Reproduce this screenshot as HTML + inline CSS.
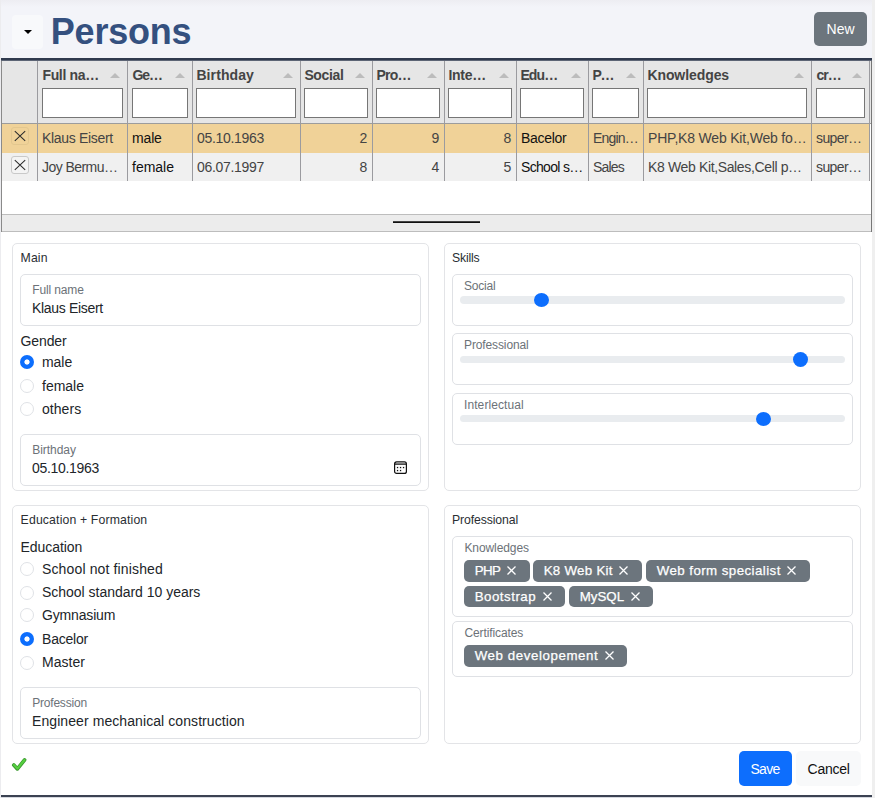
<!DOCTYPE html>
<html lang="en">
<head>
<meta charset="utf-8">
<title>Persons</title>
<style>
*{box-sizing:border-box;margin:0;padding:0}
html,body{width:875px;height:798px;overflow:hidden;background:#fff}
body{font-family:"Liberation Sans",sans-serif;font-size:14px;color:#212529;position:relative}
.abs{position:absolute}
#top{left:0;top:0;width:875px;height:58px;background:linear-gradient(#ededf2 0,#f3f4f9 7px,#f3f4f9 100%)}
#edgeL{left:0;top:0;width:1px;height:798px;background:#ececef}
#edgeR{left:872px;top:0;width:3px;height:798px;background:#efefef}
#botline{left:1px;top:795px;width:871px;height:3px;background:#3b4252;border-bottom:1px solid #d5d8df}
#dd{left:12px;top:15px;width:31px;height:34px;background:#f8f9fb;border-radius:4px}
#dd i{position:absolute;left:12px;top:15px;width:0;height:0;border-left:4px solid transparent;border-right:4px solid transparent;border-top:4px solid #000}
h1{position:absolute;left:50.8px;top:12.4px;font-size:36px;line-height:40px;font-weight:bold;color:#34507f;letter-spacing:-.22px}
.btn{position:absolute;border-radius:5px;text-align:center;font-size:14px}
#new{left:814px;top:12px;width:53px;height:34px;line-height:34px;background:#6c757d;color:#fff}
#save{left:739px;top:751px;width:53px;height:35px;line-height:35px;background:#0d6efd;color:#fff}
#cancel{left:796px;top:751px;width:65px;height:35px;line-height:35px;background:#f8f9fa;color:#111}

/* grid */
#grid{left:1px;top:58px;width:871px;height:174px;border-left:1px solid #8a8a8a;border-right:1px solid #777;background:#fff}
#gtop{left:1px;top:58px;width:871px;height:3px;background:#303a4e;border-bottom:1px solid #5d6575}
#ghead{left:2px;top:60px;width:869px;height:64px;background:#e6e6e6;border-bottom:1px solid #9c9c9c}
.row{left:2px;width:867px;height:29px}
#r1{top:124px;height:29px;background:#f0d298}
#r2{top:153px;height:28px;background:#f0f0f0}
#gfoot{left:2px;top:214px;width:869px;height:18px;background:#ececec;border-top:1px solid #bdbdbd;border-bottom:1px solid #bdbdbd}
#gfoot i{position:absolute;left:391px;top:6px;width:87px;height:2px;background:#111;border-top:1px solid #444}
.sep{top:61px;width:1px;height:120px;background:#9b9b9f}
.hl{top:66px;font-size:14px;line-height:18px;font-weight:bold;color:#444;white-space:nowrap}
.ar{top:73px;width:0;height:0;border-left:5px solid transparent;border-right:5px solid transparent;border-bottom:5px solid #bcbcbc}
.fi{top:88px;height:30px;background:#fff;border:1px solid #767676}
.c{font-size:14px;line-height:18px;white-space:nowrap;color:#444}
.c.d{color:#111}
.c.r{text-align:right}
.xb{left:10.5px;width:18px;height:18px;border:1px solid #c9c9c9;border-radius:3px;background:#f4f4f4}
.xb svg{position:absolute;left:2px;top:2px}
#xb1{top:127px;border-color:#e3c78f;background:transparent}
#xb2{top:156px}

/* cards */
.card{border:1px solid #e3e4e7;border-radius:5px;background:#fff}
.lg{font-size:12.3px;line-height:16px;color:#2a2e33;white-space:nowrap}
.box{border:1px solid #dfe1e5;border-radius:5px;background:#fff}
.fl{font-size:12px;line-height:14px;color:#6c7278;white-space:nowrap}
.fv{font-size:14px;line-height:18px;color:#212529;white-space:nowrap}
.bt{white-space:nowrap;color:#111}
.bt.w{color:#fff}
.lb{font-size:14px;line-height:18px;color:#212529;white-space:nowrap}
.rd{left:20px;width:14px;height:14px;border-radius:50%;border:1px solid #dfe2e6;background:#fff}
.rd.on{border:0;background:radial-gradient(circle at 50% 50%,#fff 0,#fff 2.2px,#0d6efd 3px)}
.trk{height:7px;border-radius:4px;background:#e9ecef}
.th{width:15px;height:15px;border-radius:50%;background:#0d6efd}
.tag{border-radius:5px;background:#6c757d;color:#fff;font-size:13.3px;padding-left:10.7px;white-space:nowrap;-webkit-text-stroke:.25px #fff}
.tag svg{display:inline-block;vertical-align:0.4px;margin-left:6.4px}
</style>
</head>
<body>
<div class="abs" id="top"></div>
<div class="abs" id="dd"><i></i></div>
<h1>Persons</h1>
<div class="btn" id="new"></div>

<div class="abs" id="grid"></div>
<div class="abs" id="ghead"></div>
<div class="abs" id="gtop"></div>
<div class="abs row" id="r1"></div>
<div class="abs row" id="r2"></div>
<div class="abs" id="gfoot"><i></i></div>
<!--GRID-->
<div class="abs sep" style="left:37px"></div>
<div class="abs sep" style="left:127px"></div>
<div class="abs sep" style="left:192px"></div>
<div class="abs sep" style="left:300px"></div>
<div class="abs sep" style="left:372px"></div>
<div class="abs sep" style="left:444px"></div>
<div class="abs sep" style="left:516px"></div>
<div class="abs sep" style="left:588px"></div>
<div class="abs sep" style="left:643px"></div>
<div class="abs sep" style="left:811px"></div>
<div class="abs sep" style="left:869px"></div>
<div class="abs xb" id="xb1"><svg width="12" height="12" viewBox="0 0 12 12"><path d="M0.8 1.2L11.2 10.8M11.2 1.2L0.8 10.8" stroke="#2a2a2a" stroke-width="1.05" fill="none"/></svg></div>
<div class="abs xb" id="xb2"><svg width="12" height="12" viewBox="0 0 12 12"><path d="M0.8 1.2L11.2 10.8M11.2 1.2L0.8 10.8" stroke="#2a2a2a" stroke-width="1.05" fill="none"/></svg></div>
<div class="abs hl" style="left:42.4px;top:66.0px;letter-spacing:-0.31px">Full na…</div>
<div class="abs ar" style="left:110px"></div>
<div class="abs fi" style="left:42px;width:81px"></div>
<div class="abs c " style="left:42px;top:129.0px;letter-spacing:-0.32px">Klaus Eisert</div>
<div class="abs c " style="left:42px;top:158.0px;letter-spacing:-0.55px">Joy Bermu…</div>
<div class="abs hl" style="left:132.4px;top:66.0px;letter-spacing:-0.99px">Ge…</div>
<div class="abs ar" style="left:175px"></div>
<div class="abs fi" style="left:132px;width:56px"></div>
<div class="abs c d" style="left:132px;top:129.0px;letter-spacing:-0.16px">male</div>
<div class="abs c d" style="left:132px;top:158.0px;letter-spacing:-0.00px">female</div>
<div class="abs hl" style="left:196.4px;top:66.0px;letter-spacing:0.10px">Birthday</div>
<div class="abs ar" style="left:283px"></div>
<div class="abs fi" style="left:196px;width:100px"></div>
<div class="abs c " style="left:197px;top:129.0px;letter-spacing:-0.32px">05.10.1963</div>
<div class="abs c " style="left:197px;top:158.0px;letter-spacing:-0.32px">06.07.1997</div>
<div class="abs hl" style="left:304.4px;top:66.0px;letter-spacing:-0.37px">Social</div>
<div class="abs ar" style="left:355px"></div>
<div class="abs fi" style="left:304px;width:64px"></div>
<div class="abs c r" style="left:305px;top:129.0px;width:62.3px">2</div>
<div class="abs c r" style="left:305px;top:158.0px;width:62.3px">8</div>
<div class="abs hl" style="left:376.4px;top:66.0px;letter-spacing:-0.73px">Pro…</div>
<div class="abs ar" style="left:427px"></div>
<div class="abs fi" style="left:376px;width:64px"></div>
<div class="abs c r" style="left:377px;top:129.0px;width:62.3px">9</div>
<div class="abs c r" style="left:377px;top:158.0px;width:62.3px">4</div>
<div class="abs hl" style="left:448.4px;top:66.0px;letter-spacing:-0.24px">Inte…</div>
<div class="abs ar" style="left:499px"></div>
<div class="abs fi" style="left:448px;width:64px"></div>
<div class="abs c r" style="left:449px;top:129.0px;width:62.3px">8</div>
<div class="abs c r" style="left:449px;top:158.0px;width:62.3px">5</div>
<div class="abs hl" style="left:520.4px;top:66.0px;letter-spacing:-0.86px">Edu…</div>
<div class="abs ar" style="left:571px"></div>
<div class="abs fi" style="left:520px;width:64px"></div>
<div class="abs c d" style="left:521px;top:129.0px;letter-spacing:-0.31px">Bacelor</div>
<div class="abs c d" style="left:521px;top:158.0px;letter-spacing:-0.68px">School s…</div>
<div class="abs hl" style="left:592.4px;top:66.0px;letter-spacing:-1.22px">P…</div>
<div class="abs ar" style="left:626px"></div>
<div class="abs fi" style="left:592px;width:47px"></div>
<div class="abs c " style="left:593px;top:129.0px;letter-spacing:-0.83px">Engin…</div>
<div class="abs c " style="left:593px;top:158.0px;letter-spacing:-0.80px">Sales</div>
<div class="abs hl" style="left:647.4px;top:66.0px;letter-spacing:-0.08px">Knowledges</div>
<div class="abs ar" style="left:794px"></div>
<div class="abs fi" style="left:647px;width:160px"></div>
<div class="abs c " style="left:648px;top:129.0px;letter-spacing:-0.19px">PHP,K8 Web Kit,Web fo…</div>
<div class="abs c " style="left:648px;top:158.0px;letter-spacing:-0.36px">K8 Web Kit,Sales,Cell p…</div>
<div class="abs hl" style="left:816.4px;top:66.0px;letter-spacing:-0.94px">cr…</div>
<div class="abs ar" style="left:852px"></div>
<div class="abs fi" style="left:816px;width:49px"></div>
<div class="abs c " style="left:816px;top:129.0px;letter-spacing:-0.62px">super…</div>
<div class="abs c " style="left:816px;top:158.0px;letter-spacing:-0.62px">super…</div>
<!--/GRID-->

<div class="btn" id="save"></div>
<div class="btn" id="cancel"></div>
<!--FORM-->
<div class="abs card" style="left:12px;top:243px;width:417px;height:248px"></div>
<div class="abs card" style="left:444px;top:243px;width:417px;height:248px"></div>
<div class="abs card" style="left:12px;top:505px;width:417px;height:239px"></div>
<div class="abs card" style="left:444px;top:505px;width:417px;height:239px"></div>
<div class="abs lg" style="left:20.6px;top:249px;font-size:12.25px;line-height:18px;letter-spacing:0.11px">Main</div>
<div class="abs box" style="left:20px;top:274px;width:401px;height:52px"></div>
<div class="abs fl" style="left:32.2px;top:281px;font-size:12px;line-height:18px;letter-spacing:-0.13px">Full name</div>
<div class="abs fv" style="left:32px;top:298px;font-size:14px;line-height:20px;letter-spacing:-0.32px">Klaus Eisert</div>
<div class="abs lb" style="left:20.6px;top:331px;font-size:14px;line-height:20px;letter-spacing:-0.12px">Gender</div>
<div class="abs rd on" style="top:355px"></div>
<div class="abs lb" style="left:42px;top:352px;font-size:14px;line-height:20px;letter-spacing:-0.04px">male</div>
<div class="abs rd" style="top:379px"></div>
<div class="abs lb" style="left:42px;top:376px;font-size:14px;line-height:20px;letter-spacing:-0.00px">female</div>
<div class="abs rd" style="top:402px"></div>
<div class="abs lb" style="left:42px;top:399px;font-size:14px;line-height:20px;letter-spacing:0.05px">others</div>
<div class="abs box" style="left:20px;top:434px;width:401px;height:52px"></div>
<div class="abs fl" style="left:32.2px;top:441px;font-size:12px;line-height:18px;letter-spacing:-0.03px">Birthday</div>
<div class="abs fv" style="left:32px;top:458px;font-size:14px;line-height:20px;letter-spacing:-0.30px">05.10.1963</div>
<svg class="abs" style="left:394px;top:461px" width="13" height="13" viewBox="0 0 13 13"><rect x="0.6" y="0.9" width="11.8" height="11.5" rx="2" fill="none" stroke="#111" stroke-width="1.2"/><path d="M0.6 3.1H12.4" stroke="#111" stroke-width="1.3"/><g fill="#111"><rect x="2.9" y="5.9" width="1.3" height="1.3"/><rect x="5.9" y="5.9" width="1.3" height="1.3"/><rect x="8.9" y="5.9" width="1.3" height="1.3"/><rect x="2.9" y="8.9" width="1.3" height="1.3"/><rect x="5.9" y="8.9" width="1.3" height="1.3"/></g></svg>
<div class="abs lg" style="left:452px;top:249px;font-size:12.25px;line-height:18px;letter-spacing:-0.20px">Skills</div>
<div class="abs box" style="left:452px;top:274px;width:401px;height:52px"></div>
<div class="abs fl" style="left:464px;top:277px;font-size:12px;line-height:18px;letter-spacing:-0.21px">Social</div>
<div class="abs trk" style="left:460px;top:296px;width:385px;height:8px"></div>
<div class="abs th" style="left:533.9px;top:293px;height:14px"></div>
<div class="abs box" style="left:452px;top:333px;width:401px;height:52px"></div>
<div class="abs fl" style="left:464px;top:336px;font-size:12px;line-height:18px;letter-spacing:-0.12px">Professional</div>
<div class="abs trk" style="left:460px;top:356px;width:385px;height:7px"></div>
<div class="abs th" style="left:793.1px;top:352px;height:15px"></div>
<div class="abs box" style="left:452px;top:393px;width:401px;height:52px"></div>
<div class="abs fl" style="left:464px;top:396px;font-size:12px;line-height:18px;letter-spacing:0.09px">Interlectual</div>
<div class="abs trk" style="left:460px;top:415px;width:385px;height:7px"></div>
<div class="abs th" style="left:755.5px;top:412px;height:14px"></div>
<div class="abs lg" style="left:20.6px;top:511px;font-size:12.25px;line-height:18px;letter-spacing:0.15px">Education + Formation</div>
<div class="abs lb" style="left:20.6px;top:537px;font-size:14px;line-height:20px;letter-spacing:-0.07px">Education</div>
<div class="abs rd" style="top:562px"></div>
<div class="abs lb" style="left:42px;top:559px;font-size:14px;line-height:20px;letter-spacing:0.14px">School not finished</div>
<div class="abs rd" style="top:586px"></div>
<div class="abs lb" style="left:42px;top:582px;font-size:14px;line-height:20px;letter-spacing:-0.02px">School standard 10 years</div>
<div class="abs rd" style="top:608px"></div>
<div class="abs lb" style="left:42px;top:605px;font-size:14px;line-height:20px;letter-spacing:-0.16px">Gymnasium</div>
<div class="abs rd on" style="top:632px"></div>
<div class="abs lb" style="left:42px;top:629px;font-size:14px;line-height:20px;letter-spacing:-0.21px">Bacelor</div>
<div class="abs rd" style="top:656px"></div>
<div class="abs lb" style="left:42px;top:652px;font-size:14px;line-height:20px;letter-spacing:0.04px">Master</div>
<div class="abs box" style="left:20px;top:687px;width:401px;height:52px"></div>
<div class="abs fl" style="left:32.2px;top:694px;font-size:12px;line-height:18px;letter-spacing:-0.20px">Profession</div>
<div class="abs fv" style="left:32px;top:711px;font-size:14px;line-height:20px;letter-spacing:0.08px">Engineer mechanical construction</div>
<div class="abs lg" style="left:452px;top:511px;font-size:12.25px;line-height:18px;letter-spacing:-0.11px">Professional</div>
<div class="abs box" style="left:452px;top:536px;width:401px;height:81px"></div>
<div class="abs fl" style="left:464.4px;top:539px;font-size:12px;line-height:18px;letter-spacing:-0.08px">Knowledges</div>
<div class="abs box" style="left:452px;top:621px;width:401px;height:56px"></div>
<div class="abs fl" style="left:464.4px;top:624px;font-size:12px;line-height:18px;letter-spacing:-0.10px">Certificates</div>
<div class="abs tag" style="left:464px;top:560px;width:66px;height:22px;line-height:22px"><span style="letter-spacing:-0.58px">PHP</span><svg width="9" height="9" viewBox="0 0 9 9"><path d="M0.5 0.5L8.5 8.5M8.5 0.5L0.5 8.5" stroke="#fff" stroke-width="1.25" fill="none"/></svg></div>
<div class="abs tag" style="left:533px;top:560px;width:109px;height:22px;line-height:22px"><span style="letter-spacing:0.28px">K8 Web Kit</span><svg width="9" height="9" viewBox="0 0 9 9"><path d="M0.5 0.5L8.5 8.5M8.5 0.5L0.5 8.5" stroke="#fff" stroke-width="1.25" fill="none"/></svg></div>
<div class="abs tag" style="left:646px;top:560px;width:164px;height:22px;line-height:22px"><span style="letter-spacing:0.44px">Web form specialist</span><svg width="9" height="9" viewBox="0 0 9 9"><path d="M0.5 0.5L8.5 8.5M8.5 0.5L0.5 8.5" stroke="#fff" stroke-width="1.25" fill="none"/></svg></div>
<div class="abs tag" style="left:464px;top:586px;width:101px;height:21px;line-height:21px"><span style="letter-spacing:0.50px">Bootstrap</span><svg width="9" height="9" viewBox="0 0 9 9"><path d="M0.5 0.5L8.5 8.5M8.5 0.5L0.5 8.5" stroke="#fff" stroke-width="1.25" fill="none"/></svg></div>
<div class="abs tag" style="left:569px;top:586px;width:84px;height:21px;line-height:21px"><span style="letter-spacing:0.03px">MySQL</span><svg width="9" height="9" viewBox="0 0 9 9"><path d="M0.5 0.5L8.5 8.5M8.5 0.5L0.5 8.5" stroke="#fff" stroke-width="1.25" fill="none"/></svg></div>
<div class="abs tag" style="left:464px;top:645px;width:163px;height:22px;line-height:22px"><span style="letter-spacing:0.58px">Web developement</span><svg width="9" height="9" viewBox="0 0 9 9"><path d="M0.5 0.5L8.5 8.5M8.5 0.5L0.5 8.5" stroke="#fff" stroke-width="1.25" fill="none"/></svg></div>
<div class="abs bt w" style="left:750.4px;top:759px;font-size:14px;line-height:20px;letter-spacing:-0.68px">Save</div>
<div class="abs bt" style="left:807.6px;top:759px;font-size:14px;line-height:20px;letter-spacing:-0.26px">Cancel</div>
<div class="abs bt w" style="left:826.6px;top:19px;font-size:14px;line-height:20px;letter-spacing:-0.00px">New</div>
<svg class="abs" style="left:10px;top:755px" width="18" height="18" viewBox="0 0 18 18"><path d="M3.8 10L7.4 13.9L14.6 4.9" fill="none" stroke="#3c9a30" stroke-width="3.7" stroke-linecap="round" stroke-linejoin="round"/><path d="M3.9 9.9L7.4 13.6L14.5 5" fill="none" stroke="#56d040" stroke-width="2.1" stroke-linecap="round" stroke-linejoin="round"/></svg>
<!--/FORM-->

<div class="abs" id="edgeL"></div>
<div class="abs" id="edgeR"></div>
<div class="abs" id="botline"></div>
</body>
</html>
